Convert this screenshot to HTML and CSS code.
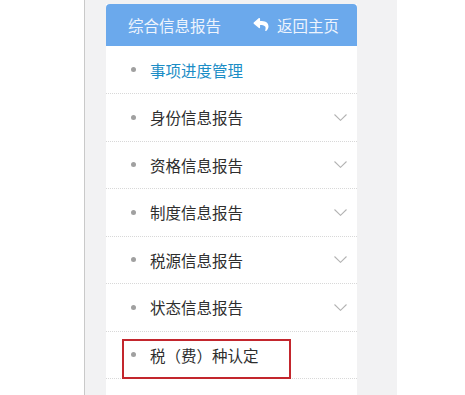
FILE: index.html
```html
<!DOCTYPE html>
<html lang="zh">
<head>
<meta charset="utf-8">
<link rel="stylesheet" href="styles.css">
</head>
<body>
<div class="frame">
  <div class="panel">
    <div class="header">
      <span class="title">综合信息报告</span>
      <span class="back">
        <svg class="reply" viewBox="0 0 512 512" width="16" height="15"><path d="M8.309 189.836L184.313 37.851C199.719 24.546 224 35.347 224 56.015v80.053c160.629 1.839 288 34.032 288 186.258 0 61.441-39.581 122.309-83.333 154.132-13.653 9.931-33.111-2.533-28.077-18.631 45.344-145.012-21.507-183.51-176.59-185.742V360c0 20.7-24.3 31.453-39.687 18.164l-176.004-152c-11.071-9.562-11.086-26.753 0-36.328z" fill="#ffffff"/></svg>
        <span>返回主页</span>
      </span>
    </div>
    <ul class="menu">
      <li class="item first active"><span class="dot"></span><span class="label">事项进度管理</span></li>
      <li class="item"><span class="dot"></span><span class="label">身份信息报告</span><svg class="chev" viewBox="0 0 13 7" width="13" height="7"><polyline points="0.5,0.5 6.5,6.3 12.5,0.5" fill="none" stroke="#b3b3b3" stroke-width="1.1"/></svg></li>
      <li class="item"><span class="dot"></span><span class="label">资格信息报告</span><svg class="chev" viewBox="0 0 13 7" width="13" height="7"><polyline points="0.5,0.5 6.5,6.3 12.5,0.5" fill="none" stroke="#b3b3b3" stroke-width="1.1"/></svg></li>
      <li class="item"><span class="dot"></span><span class="label">制度信息报告</span><svg class="chev" viewBox="0 0 13 7" width="13" height="7"><polyline points="0.5,0.5 6.5,6.3 12.5,0.5" fill="none" stroke="#b3b3b3" stroke-width="1.1"/></svg></li>
      <li class="item"><span class="dot"></span><span class="label">税源信息报告</span><svg class="chev" viewBox="0 0 13 7" width="13" height="7"><polyline points="0.5,0.5 6.5,6.3 12.5,0.5" fill="none" stroke="#b3b3b3" stroke-width="1.1"/></svg></li>
      <li class="item"><span class="dot"></span><span class="label">状态信息报告</span><svg class="chev" viewBox="0 0 13 7" width="13" height="7"><polyline points="0.5,0.5 6.5,6.3 12.5,0.5" fill="none" stroke="#b3b3b3" stroke-width="1.1"/></svg></li>
      <li class="item marked"><span class="dot"></span><span class="label">税（费）种认定</span><span class="highlight"></span></li>
    </ul>
  </div>
</div>
</body>
</html>
```
FILE: styles.css
```css
html, body {
  margin: 0;
  padding: 0;
  background: #ffffff;
  overflow: hidden;
}
body {
  font-family: "Noto Sans CJK SC", "Noto Sans", sans-serif;
}
.frame {
  margin-left: 84px;
  width: 272px;
  height: 391px;
  border-left: 1px solid #c9c9c9;
  background: #f2f2f3;
  padding: 4px 20px 0 20px;
}
.panel {
  width: 251px;
  margin-left: 1px;
  background: #ffffff;
  height: 100%;
}
.header {
  height: 42px;
  background: #6ba9ec;
  border-radius: 4px 4px 0 0;
  display: flex;
  align-items: center;
  justify-content: space-between;
  padding: 0 18px 0 22px;
  color: #eef4fd;
  font-size: 15.5px;
}
.back {
  display: flex;
  align-items: center;
  gap: 8px;
}
.reply {
  display: block;
  margin-top: -1px;
}
.menu {
  list-style: none;
  margin: 0;
  padding: 0;
}
.item {
  position: relative;
  box-sizing: border-box;
  height: 47.5px;
  border-bottom: 1px dotted #d8d8d8;
  display: flex;
  align-items: center;
  padding: 0 10px 0 25px;
  font-size: 15.5px;
  color: #2e2e2e;
}
.item.first {
  height: 48px;
}
.dot {
  width: 5px;
  height: 5px;
  border-radius: 50%;
  background: #a0a0a0;
  margin-right: 14px;
  flex: none;
}
.label {
  flex: 1;
}
.active .label {
  color: #1b8dc6;
}
.chev {
  display: block;
  flex: none;
}
.highlight {
  position: absolute;
  left: 16px;
  top: 7px;
  width: 169px;
  height: 40px;
  box-sizing: border-box;
  border: 2px solid #c3262d;
}
```
